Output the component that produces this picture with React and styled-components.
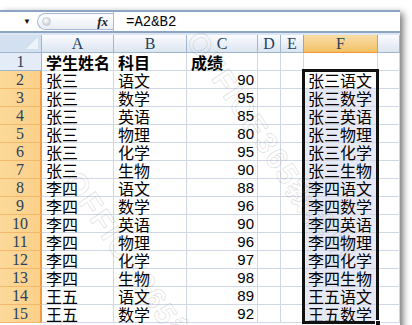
import React from 'react'
import styled, { createGlobalStyle, css } from 'styled-components'

const GlobalStyle = createGlobalStyle`
  html, body {
    margin: 0;
    padding: 0;
    background: #fff;
  }
  * {
    box-sizing: border-box;
  }
`

const CJK = `"Noto Sans CJK SC", "Noto Sans", sans-serif`
const MONO = `"Liberation Mono", "DejaVu Sans Mono", monospace`
const HEAD = `"Liberation Serif", "DejaVu Serif", serif`

const rows = [
  ['张三', '语文', 90],
  ['张三', '数学', 95],
  ['张三', '英语', 85],
  ['张三', '物理', 80],
  ['张三', '化学', 95],
  ['张三', '生物', 90],
  ['李四', '语文', 88],
  ['李四', '数学', 96],
  ['李四', '英语', 90],
  ['李四', '物理', 96],
  ['李四', '化学', 97],
  ['李四', '生物', 98],
  ['王五', '语文', 89],
  ['王五', '数学', 92]
]

const columns = ['A', 'B', 'C', 'D', 'E', 'F', '']

const Page = styled.div`
  width: 412px;
  height: 325px;
  padding-top: 10px;
  overflow: hidden;
  background: #fff;
`

const Window = styled.div`
  position: relative;
  width: 400px;
  height: 330px;
  background: #fff;
  box-shadow: 3px 3px 7px rgba(0, 0, 0, 0.55);
`

const FormulaBar = styled.div`
  display: flex;
  height: 23px;
  border-top: 2px solid #8da5c5;
  border-bottom: 2px solid #8da5c5;
  background: #fff;
`

const NameBox = styled.div`
  width: 37px;
  display: flex;
  justify-content: flex-end;
  align-items: center;
  padding-right: 6px;
  font-size: 8px;
  color: #111;
`

const FxPill = styled.div`
  width: 76px;
  margin: 1px 0;
  display: flex;
  align-items: center;
  justify-content: space-between;
  padding: 0 5px 0 4px;
  border: 1px solid #a7b9d1;
  border-right: none;
  border-radius: 10px 0 0 10px;
  background: linear-gradient(#ffffff, #e9eef5);
`

const Knob = styled.span`
  width: 9px;
  height: 9px;
  border-radius: 50%;
  background: radial-gradient(circle at 40% 35%, #ffffff, #b9c3cf);
  border: 1px solid #c6cdd6;
`

const Fx = styled.span`
  font-family: "Liberation Serif", serif;
  font-style: italic;
  font-weight: bold;
  font-size: 13px;
  color: #222;
`

const FormulaInput = styled.div`
  flex: 1;
  display: flex;
  align-items: center;
  padding-left: 12px;
  border-left: 1px solid #a7b9d1;
  font-family: ${MONO};
  font-size: 14px;
  color: #000;
`

const Gap = styled.div`
  height: 2px;
  background: #dde7f3;
`

const Sheet = styled.div`
  position: relative;
  display: grid;
  grid-template-columns: 42px 72px 73px 71px 23px 23px 74px 22px;
  grid-auto-rows: 18px;
`

const headBase = css`
  display: flex;
  align-items: center;
  justify-content: center;
  font-family: ${HEAD};
  font-size: 16px;
  color: #27415f;
`

const Corner = styled.div`
  position: relative;
  background: #d3e0ef;
  border-right: 1px solid #9eb6ce;
  border-bottom: 1px solid #9eb6ce;

  svg {
    position: absolute;
    right: 3px;
    bottom: 3px;
  }
`

const ColHead = styled.div`
  ${headBase}
  padding-top: 1px;
  border-right: 1px solid ${p => (p.$active ? '#f29436' : '#9eb6ce')};
  border-bottom: 1px solid ${p => (p.$active ? '#f29436' : '#9eb6ce')};
  border-left: ${p => (p.$active ? '1px solid #f29436' : 'none')};
  margin-left: ${p => (p.$active ? '-1px' : '0')};
  background: ${p => (p.$active
    ? 'linear-gradient(#f9dca6, #f6cf86 55%, #f2c060)'
    : 'linear-gradient(#fbfcfe, #e9eff7 55%, #dce5f0)')};
`

const RowHead = styled.div`
  ${headBase}
  padding-top: 1px;
  background: ${p => (p.$active ? 'linear-gradient(90deg, #fcd999, #fbd08a)' : '#e4ecf7')};
  border-right: ${p => (p.$active ? '2px solid #f29b3c' : '1px solid #9eb6ce')};
  border-bottom: 1px solid ${p => (p.$active ? '#f3b86c' : '#9eb6ce')};
`

const Cell = styled.div`
  display: flex;
  align-items: center;
  justify-content: ${p => (p.$num ? 'flex-end' : 'flex-start')};
  padding: 0 ${p => (p.$num ? '3px' : '0')} 0 ${p => (p.$num ? '0' : '4px')};
  border-right: 1px solid #d0d7e5;
  border-bottom: 1px solid #d0d7e5;
  background: ${p => (p.$selected ? '#e7eaf5' : '#fff')};
  font-family: ${p => (p.$num ? '"Liberation Sans", sans-serif' : CJK)};
  font-size: ${p => (p.$num ? '15px' : '16px')};
  font-weight: ${p => (p.$bold ? 'bold' : 'normal')};
  line-height: 1;
  color: #000;
  white-space: nowrap;
`

const Selection = styled.div`
  position: absolute;
  left: 302px;
  top: 34px;
  width: 77px;
  height: 255px;
  border: 3px solid #111;
  pointer-events: none;
`

const Handle = styled.span`
  position: absolute;
  right: -5px;
  bottom: -5px;
  width: 6px;
  height: 6px;
  background: #111;
  border: 1px solid #fff;
`

const Watermark = styled.span`
  position: absolute;
  left: ${p => p.$x}px;
  top: ${p => p.$y}px;
  transform: rotate(56deg);
  transform-origin: left top;
  font-family: "Liberation Sans", ${CJK};
  font-size: 30px;
  font-weight: bold;
  letter-spacing: 2px;
  color: transparent;
  -webkit-text-stroke: 0.7px rgba(120, 120, 120, 0.25);
  white-space: nowrap;
  pointer-events: none;
`

export default function App() {
  return (
    <Page>
      <GlobalStyle />
      <Window>
        <FormulaBar>
          <NameBox>▼</NameBox>
          <FxPill>
            <Knob />
            <Fx>fx</Fx>
          </FxPill>
          <FormulaInput>=A2&amp;B2</FormulaInput>
        </FormulaBar>
        <Gap />
        <Sheet>
          <Corner>
            <svg width='12' height='12' viewBox='0 0 12 12'>
              <polygon points='12,0 12,12 0,12' fill='#eef3f9' />
            </svg>
          </Corner>
          {columns.map((c, i) => (
            <ColHead key={i} $active={c === 'F'}>{c}</ColHead>
          ))}

          <RowHead>1</RowHead>
          <Cell $bold>学生姓名</Cell>
          <Cell $bold>科目</Cell>
          <Cell $bold>成绩</Cell>
          <Cell />
          <Cell />
          <Cell />
          <Cell />

          {rows.map(([name, subject, score], i) => (
            <React.Fragment key={i}>
              <RowHead $active>{i + 2}</RowHead>
              <Cell>{name}</Cell>
              <Cell>{subject}</Cell>
              <Cell $num>{score}</Cell>
              <Cell />
              <Cell />
              <Cell $selected={i > 0}>{name + subject}</Cell>
              <Cell />
            </React.Fragment>
          ))}

          <Selection>
            <Handle />
          </Selection>
          <Watermark $x={214} $y={-14}>OFFICE365教程网</Watermark>
          <Watermark $x={92} $y={126}>OFFICE365教程网</Watermark>
        </Sheet>
      </Window>
    </Page>
  )
}
